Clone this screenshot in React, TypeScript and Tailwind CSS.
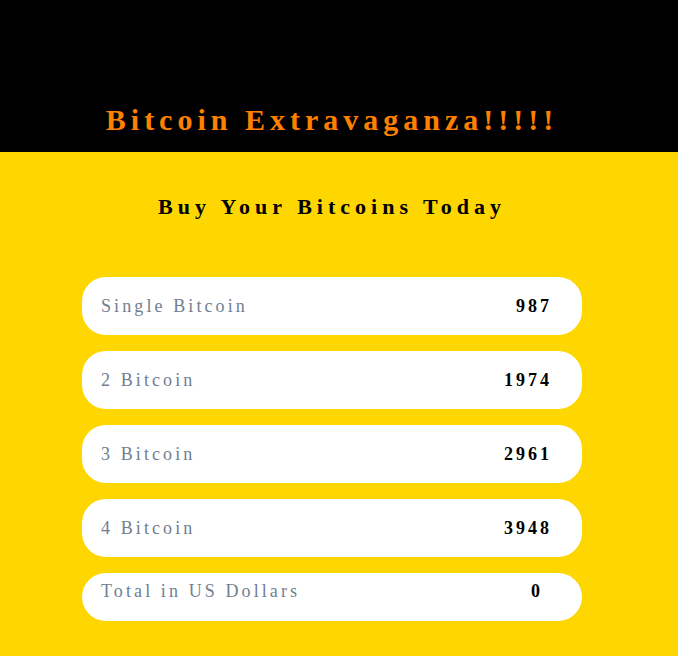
import React from "react";

const rows = [
  { label: "Single Bitcoin", value: "987" },
  { label: "2 Bitcoin", value: "1974" },
  { label: "3 Bitcoin", value: "2961" },
  { label: "4 Bitcoin", value: "3948" },
];

export default function App() {
  return (
    <div
      className="min-h-[656px] bg-[#ffd700] flex flex-col"
      style={{ fontFamily: '"Liberation Serif", "Times New Roman", serif' }}
    >
      <div className="bg-black h-[152px] w-[664px] pt-[103px] relative">
        <div className="absolute inset-y-0 left-[664px] w-[14px] bg-black" />
        <h1 className="text-center text-[30px] leading-[34px] font-bold tracking-[5px] text-[#ff8000]">
          Bitcoin Extravaganza!!!!!
        </h1>
      </div>
      <div className="w-[664px] flex flex-col items-center pt-[42px]">
        <h2 className="text-[22px] leading-[26px] font-bold tracking-[5px] text-black">
          Buy Your Bitcoins Today
        </h2>
        <div className="mt-[57px] w-[500px] flex flex-col gap-4">
          {rows.map((r) => (
            <div
              key={r.label}
              className="h-[58px] bg-white rounded-[24px] flex items-center justify-between pl-[19px] pr-[30px]"
            >
              <span className="text-[18px] leading-[20px] tracking-[3.1px] text-[#708090]">
                {r.label}
              </span>
              <span className="text-[18px] leading-[20px] tracking-[3px] font-bold text-black">
                {r.value}
              </span>
            </div>
          ))}
          <div className="h-[48px] bg-white rounded-[24px] flex items-start justify-between pl-[19px] pr-[39px] pt-[8px]">
            <span className="text-[18px] leading-[20px] tracking-[3.1px] text-[#708090]">
              Total in US Dollars
            </span>
            <span className="text-[18px] leading-[20px] tracking-[3px] font-bold text-black">
              0
            </span>
          </div>
        </div>
      </div>
    </div>
  );
}
